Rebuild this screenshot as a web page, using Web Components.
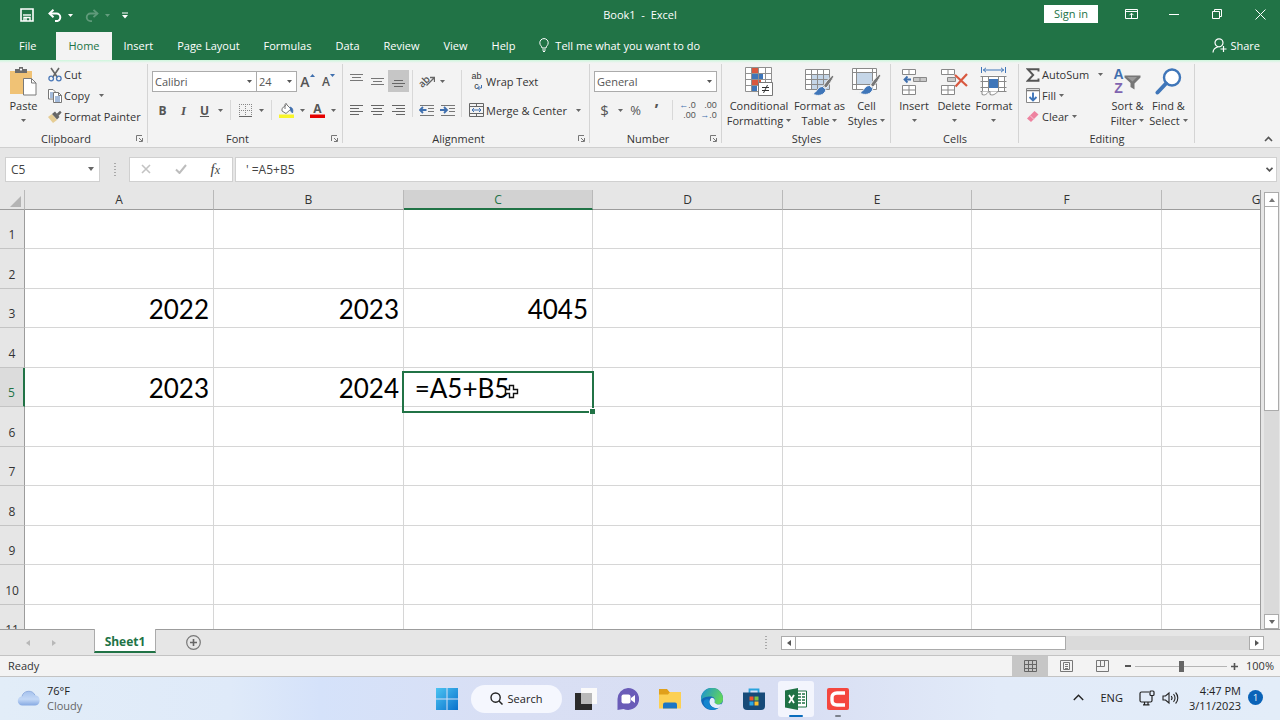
<!DOCTYPE html>
<html lang="en">
<head>
<meta charset="utf-8">
<title>Book1 - Excel</title>
<style>
  body {
    margin: 0;
    font: 11px/15px "Open Sans", "Noto Sans", sans-serif;
    color: #333;
  }
</style>
</head>
<body>
<excel-app></excel-app>

<script>
// every icon is [width, height, markup]
const ICONS = {
  save: [14, 14, '<path d="M1 1h12v12H1z" fill="none" stroke="#fff" stroke-width="1.6"/><path d="M3 7h8" stroke="#fff" stroke-width="1.4"/><path d="M4 13V9.500h6V13M6 10v3" fill="none" stroke="#fff" stroke-width="1.4"/>'],
  undo: [14, 13, '<path d="M1.500 4.500h7a3.800 3.800 0 0 1 0 7.600H7" fill="none" stroke="#fff" stroke-width="2"/><path d="M5.500 .8L1.500 4.500l4 3.700" fill="none" stroke="#fff" stroke-width="2"/>'],
  redo: [14, 13, '<g opacity=".28"><path d="M12.500 4.500h-7a3.800 3.800 0 0 0 0 7.600H7" fill="none" stroke="#fff" stroke-width="1.800"/><path d="M8.500 .8l4 3.700-4 3.700" fill="none" stroke="#fff" stroke-width="1.800"/></g>'],
  qat: [6, 7, '<path d="M0 1h6" stroke="#fff"/><path d="M0 3h6L3 6.500z" fill="#fff"/>'],
  down: [5, 3, '<path d="M0 0h5L2.500 3z" fill="currentColor"/>'],
  display: [13, 10, '<path d="M.5.5h12v9H.5z" fill="none" stroke="#fff"/><path d="M1 2.500h11M6.500 9V4.500M4.500 6.200l2-2 2 2" fill="none" stroke="#fff"/>'],
  minimize: [10, 1, '<path d="M0 .5h10" stroke="#fff"/>'],
  restore: [10, 10, '<path d="M.5 2.500h7v7h-7z M2.500 2.500v-2h7v7h-2" fill="none" stroke="#fff"/>'],
  close: [11, 11, '<path d="M.5.5l10 10M10.500.5l-10 10" stroke="#fff"/>'],
  bulb: [10, 14, '<path d="M3 10C3 8 .8 7.500 .8 4.800a4.200 4.200 0 0 1 8.400 0C9.200 7.500 7 8 7 10zM3.200 12h3.600M4 13.500h2" fill="none" stroke="#fff"/>'],
  share: [15, 15, '<circle cx="7" cy="4.800" r="4" fill="none" stroke="#fff" stroke-width="1.200"/><path d="M1 14.500c.3-3.500 2.500-5 4.800-5.500M8.500 11h6M11.500 8v6" fill="none" stroke="#fff" stroke-width="1.200"/>'],
  paste: [28, 29, '<path d="M1 4h22v23H1z" fill="#f0c275"/><path d="M6 6V2h4V0h4v2h4v4z" fill="#6b6b6b"/><circle cx="12" cy="2.600" r="1.100" fill="#fff"/><path d="M14.500 11.500h8l4.500 4.500v12H14.500z" fill="#fff" stroke="#7a7a7a"/><path d="M22.500 11.500V16H27" fill="none" stroke="#7a7a7a"/>'],
  cut: [14, 15, '<path d="M3 1l6.500 9.500M11 1L4.500 10.500" stroke="#666" stroke-width="1.600"/><circle cx="3.200" cy="11.500" r="2.300" fill="none" stroke="#4a78b8" stroke-width="1.300"/><circle cx="10.800" cy="11.500" r="2.300" fill="none" stroke="#4a78b8" stroke-width="1.300"/>'],
  copy: [14, 14, '<path d="M.5.5H5l2.500 2.500v7H.5z" fill="#fff" stroke="#777"/><path d="M2 4h3M2 6h3M2 8h3" stroke="#4a78b8"/><path d="M5.500 3.500h5l3 3v7h-8z" fill="#fff" stroke="#777"/><path d="M10.500 3.500v3h3" fill="none" stroke="#777"/><path d="M7 8h5M7 10h5M7 12h5" stroke="#4a78b8"/>'],
  painter: [14, 13, '<path d="M0 7l4-3 5 6-4 3z" fill="#e6cd94"/><path d="M4 4l3-2.500L11.500 7 9 9.500z" fill="#666"/><path d="M8.500 4L12 .8l1.600 1.600L10.500 6z" fill="#666"/>'],
  launcher: [7, 7, '<path d="M.5 6V.5H6M3 3l3 3M6.500 3v3.500H3" fill="none" stroke="#777"/>'],
  grow: [5, 3, '<path d="M0 3L2.500 0 5 3z" fill="#3f6fae"/>'],
  shrink: [5, 3, '<path d="M0 0h5L2.500 3z" fill="#3f6fae"/>'],
  borders: [13, 13, '<path d="M.5 0v12M6.500 0v12M12.500 0v12M0 .5h13M0 6.500h13" stroke="#888" stroke-dasharray="1 1"/><path d="M0 12.500h13" stroke="#666"/>'],
  bucket: [15, 15, '<path d="M3 5.500L7.500 1.500 12 6l-5 4.500L3 8z" fill="#fff" stroke="#777"/><path d="M6 6V1.500C6 .3 8 .3 8 1.500" fill="none" stroke="#777"/><path d="M11 4c2.500.5 3.500 3 2.500 6-1-1.200-2-1.500-2-3.500z" fill="#3f6fae" stroke="#3f6fae" stroke-width=".8"/><path d="M0 11.500h15V15H0z" fill="#f8f52a"/>'],
  fontcolor: [15, 15, '<path d="M0 11.500h15V15H0z" fill="#e60000"/>'],
  vtop: [13, 15, '<path d="M0 .5h13M2 3.500h9M0 6.500h13" stroke="#777"/>'],
  vmid: [13, 15, '<path d="M0 4.500h13M2 7.500h9M0 10.500h13" stroke="#777"/>'],
  vbot: [13, 15, '<path d="M2 6.500h9M0 9.500h13M2 12.500h9" stroke="#666"/>'],
  left: [13, 11, '<path d="M0 .5h13M0 3.500h9M0 6.500h13M0 9.500h9" stroke="#666"/>'],
  center: [13, 11, '<path d="M0 .5h13M2 3.500h9M0 6.500h13M2 9.500h9" stroke="#666"/>'],
  right: [13, 11, '<path d="M0 .5h13M4 3.500h9M0 6.500h13M4 9.500h9" stroke="#666"/>'],
  outdent: [16, 13, '<path d="M1 1.500h14M9 4.500h6M9 7.500h6M1 11.500h14" stroke="#777"/><path d="M7.500 6H2M4 3L1 6l3 3" fill="none" stroke="#3f6fae" stroke-width="1.800"/>'],
  indent: [16, 13, '<path d="M1 1.500h14M9 4.500h6M9 7.500h6M1 11.500h14" stroke="#777"/><path d="M0 6h6M4 3l3 3-3 3" fill="none" stroke="#3f6fae" stroke-width="1.800"/>'],
  turn: [9, 10, '<path d="M.5 9.500L8 2M4 1.500h4.500V6" fill="none" stroke="#666" stroke-width="1.300"/>'],
  wrapturn: [5, 5, '<path d="M4.500 0v3H1M2.500 1L.5 3l2 2" fill="none" stroke="#3f6fae"/>'],
  merge: [15, 14, '<path d="M.5.5h14v13H.5zM.5 3.500h14M.5 10.500h14M7.500 0v3.500M7.500 10.500V14" fill="none" stroke="#666"/><path d="M3 7h9M5 5L3 7l2 2M10 5l2 2-2 2" fill="none" stroke="#3f6fae"/>'],
  condfmt: [28, 29, '<path d="M1 1h26v23H1z" fill="#fff"/><path d="M7 1h7v5H7z" fill="#d8583f"/><path d="M7 7h11v5H7z" fill="#3f76b9"/><path d="M7 13h9v5H7z" fill="#d8583f"/><path d="M7 19h5v5H7z" fill="#3f76b9"/><path d="M.5.5h26v24H.5zM.5 6.500h26M.5 12.500h26M.5 18.500h26M6.500.5v24M13.500.5v24M20.500.5v24" fill="none" stroke="#909090"/><path d="M13.500 15.500h14v13h-14z" fill="#fff" stroke="#777"/><path d="M17 20.500h7M17 23.500h7M22.500 18l-4 8" stroke="#333" fill="none"/>'],
  fmttable: [29, 28, '<path d="M.5 1.500h24v20H.5z" fill="#fff"/><path d="M7 7h17v14H7z" fill="#c5d6e8"/><path d="M.5 1.500h24v20H.5zM.5 6.500h24M.5 11.500h24M.5 16.500h24M6.500 1.500v20M12.500 1.500v20M18.500 1.500v20" fill="none" stroke="#8a8a8a"/><path d="M27.500 7.500C25 9 20 15 18.500 18l2.500 2.200C24 17 27.500 11.500 28.800 8.500z" fill="#777" stroke="#f3f3f3"/><path d="M17.500 18.500c-5 0-5 5.500-10 7.500 5 2.500 12 2 13.500-4.500z" fill="#3f76b9" stroke="#f3f3f3"/>'],
  cellstyles: [29, 28, '<path d="M.5.5h24v21H.5z" fill="#fff"/><path d="M5 5h15v11H5z" fill="#c5d6e8"/><path d="M.5.5h24v21H.5zM.5 4.500h24M.5 16.500h24M4.500.5v21M20.500.5v21" fill="none" stroke="#8a8a8a"/><path d="M27.500 6.500C25 8 20 14 18.500 17l2.500 2.200C24 16 27.500 10.500 28.800 7.500z" fill="#777" stroke="#f3f3f3"/><path d="M17.500 17.500c-5 0-5 5.500-10 7.500 5 2.500 12 2 13.500-4.500z" fill="#3f76b9" stroke="#f3f3f3"/>'],
  insert: [26, 28, '<path d="M1.500 1.500h13v5h-13zM8 1.500v5M1.500 17.500h13v9h-13zM1.500 22h13M8 17.500v9" fill="#fff" stroke="#888"/><path d="M12.500 9.500h13v4h-13zM19 9.500v4" fill="#c8c8c8" stroke="#888"/><path d="M10 11.500H4M6.500 8.500l-3 3 3 3" fill="none" stroke="#3f6fae" stroke-width="1.800"/>'],
  delete: [28, 28, '<path d="M1.500 1.500h13v5h-13zM8 1.500v5M1.500 17.500h13v9h-13zM1.500 22h13M8 17.500v9" fill="#fff" stroke="#888"/><path d="M7.500 9.500h8v4h-8z" fill="#c8c8c8" stroke="#888"/><path d="M15 7l12 11M27 6L15.500 18.500" stroke="#d8583f" stroke-width="2.200"/>'],
  format: [27, 29, '<path d="M1.500 0v6M25.500 0v6M3 3h21M6 .8L3.500 3 6 5.200M21 .8L23.500 3 21 5.200" fill="none" stroke="#3f76b9"/><path d="M2 8.500h23.500v16H2z" fill="#fff"/><path d="M.5 9.500h26M.5 14.500h26M.5 20.500h26M.5 24.500h26M2.500 9v16M8.500 9v16M18.500 9v16M24.500 9v16" stroke="#888"/><path d="M9 12h9v9H9z" fill="#3f76b9"/><path d="M2 24.500v3c4 1.500 5-1.500 7-3M10 24.500v3c4 1.500 6-1.500 8-3" fill="#fff" stroke="#888"/>'],
  sigma: [14, 14, '<path d="M12.500 3.500V1.200H1.800L7.200 7l-5.400 5.800h10.700V10.500" fill="none" stroke="#555" stroke-width="1.900"/>'],
  fill: [14, 15, '<path d="M.5.5h13v14H.5z" fill="#fff" stroke="#888"/><path d="M.5 2.500h13" stroke="#777" stroke-width="1.500"/><path d="M7 4.500v8M3.500 9L7 12.500 10.500 9" fill="none" stroke="#3f76b9" stroke-width="1.900"/>'],
  clear: [13, 13, '<path d="M1 8.500L8.500 1l4 3.500L5 12z" fill="#ee83a0"/><path d="M4 5.500L8 9.500" stroke="#f8cad7"/>'],
  sort: [28, 27, '<path d="M11.500 7.500h16v2l-6 6V21.500l-4-2.500v-4l-6-5.500z" fill="#777"/><path d="M14 9h10l-4.500 4.500z" fill="#9a9a9a"/>'],
  find: [27, 27, '<circle cx="17" cy="9.500" r="8" fill="#fff" stroke="#3f76b9" stroke-width="2.400"/><path d="M11 15.500L2.500 24.500" stroke="#3f76b9" stroke-width="4" stroke-linecap="round"/>'],
  collapse: [9, 6, '<path d="M1 5l3.500-3.500L8 5" fill="none" stroke="#555" stroke-width="1.600"/>'],
  cancel: [10, 10, '<path d="M1 1l8 8M9 1L1 9" stroke="#c3c3c3" stroke-width="1.600"/>'],
  enter: [12, 10, '<path d="M1 5.500l3.500 3.500L11 1" fill="none" stroke="#bdbdbd" stroke-width="2"/>'],
  expand: [7, 5, '<path d="M.5 .8l3 3 3-3" fill="none" stroke="#555" stroke-width="1.800"/>'],
  dots: [2, 13, '<path d="M1 0v13" stroke="#a9a9a9" stroke-width="2" stroke-dasharray="1 2"/>'],
  corner: [11, 11, '<path d="M11 0v11H0z" fill="#b4b4b4"/>'],
  cross: [15, 15, '<path d="M5.500 1.500h4v4h4v4h-4v4h-4v-4h-4v-4h4z" fill="#fff" stroke="#111" stroke-width="1.400"/>'],
  up: [6, 4, '<path d="M0 4L3 0l3 4z" fill="#777"/>'],
  dn: [6, 4, '<path d="M0 0h6L3 4z" fill="#666"/>'],
  lt: [4, 6, '<path d="M4 0v6L0 3z" fill="currentColor"/>'],
  rt: [4, 6, '<path d="M0 0v6l4-3z" fill="currentColor"/>'],
  add: [15, 15, '<circle cx="7.500" cy="7.500" r="6.800" fill="none" stroke="#777" stroke-width="1.200"/><path d="M7.500 4v7M4 7.500h7" stroke="#666" stroke-width="1.600"/>'],
  vnormal: [13, 12, '<path d="M.5.5h12v11H.5zM.5 4.500h12M.5 8.500h12M4.500.5v11M8.500.5v11" fill="none" stroke="#666"/>'],
  vlayout: [13, 12, '<path d="M.5.5h12v11H.5zM3.500 2.500h6v7h-6zM5 4.500h3M5 6.500h3M5 8.500h3" fill="none" stroke="#777"/>'],
  vbreak: [13, 12, '<path d="M.5.5h12v11H.5zM4.500.5v6M8.500.5v6M.5 6.500h8" fill="none" stroke="#777"/>'],
  minus: [6, 2, '<path d="M0 1h6" stroke="#555" stroke-width="2"/>'],
  plus: [7, 7, '<path d="M0 3.500h7M3.500 0v7" stroke="#555" stroke-width="1.600"/>'],
  cloud: [24, 18, '<defs><linearGradient id="c" x2="0" y2="1"><stop stop-color="#a7c3ee"/><stop offset=".55" stop-color="#c3d8f6"/><stop offset="1" stop-color="#86a9e2"/></linearGradient></defs><path d="M5.500 16.500a4.600 4.600 0 0 1-.3-9.200A7 7 0 0 1 18 6.200a5.200 5.200 0 0 1 .3 10.300z" fill="url(#c)"/><path d="M5 7.300A7 7 0 0 1 18 6.200" fill="none" stroke="#7f9fd8" stroke-width=".8"/>'],
  start: [22, 22, '<defs><linearGradient id="s" x2="1" y2="1"><stop stop-color="#4cc4f2"/><stop offset="1" stop-color="#0a71cc"/></linearGradient></defs><path d="M0 0h10.500v10.500H0zM11.500 0H22v10.500H11.500zM0 11.500h10.500V22H0zM11.500 11.500H22V22H11.500z" fill="url(#s)"/>'],
  search: [13, 13, '<circle cx="5.600" cy="5.600" r="4.600" fill="none" stroke="#222" stroke-width="1.400"/><path d="M9 9l3.500 3.500" stroke="#222" stroke-width="1.500"/>'],
  taskview: [22, 22, '<path d="M6 0h16v16H6z" fill="#fafafa"/><path d="M0 5h17v17H0z" fill="#2b2b2b"/><path d="M6 5h11v11H6z" fill="#b9b9b9"/>'],
  chat: [22, 22, '<path d="M11 0a11 11 0 1 1-4.500 21L.5 22V11A11 11 0 0 1 11 0z" fill="#6a5cb8"/><rect x="4.500" y="6.500" width="9" height="9" rx="2" fill="#fff"/><path d="M14 10l4-3v8l-4-3z" fill="#fff"/>'],
  folder: [24, 21, '<path d="M1 1h8l2.500 3H22v5H1z" fill="#e0a01b"/><path d="M1 6.500h9L12 4h11v16.500H1z" fill="#fcd053"/><path d="M5 20.500v-4a2 2 0 0 1 2-2h10a2 2 0 0 1 2 2v4z" fill="#1b76c4"/>'],
  edge: [22, 22, '<defs><linearGradient id="e" y2=".4"><stop stop-color="#1a8fd6"/><stop offset="1" stop-color="#5fd45f"/></linearGradient></defs><circle cx="11" cy="11" r="11" fill="#1268b8"/><path d="M0 10.500A11 11 0 0 1 22 11c0 4-3 5.500-5.500 5.500-3 0-3.500-1-3-2 1-1.500.8-6-4-6C5 8.500 1 9.500 0 13z" fill="url(#e)"/><path d="M13.500 14.500c1 2 5 3 7.700 1A11 11 0 0 1 17.500 20C12 21 8 17 8.500 13c.3-2 1.500-3 2.500-3.300 3 .3 3.200 3.300 2.500 4.800z" fill="#e3edfb"/><path d="M8.500 12C6.500 16 11 21.500 17.500 20 12 24 3 21 2.500 14.500 3 11.500 6 10.500 8.500 12z" fill="#1585cf"/>'],
  store: [22, 22, '<path d="M6.500 5V1.500h9V5" fill="none" stroke="#2aa3dd" stroke-width="1.800"/><path d="M0 4.500h22V18a4 4 0 0 1-4 4H4a4 4 0 0 1-4-4z" fill="#174a78"/><path d="M6.500 8.500h4v4h-4z" fill="#f0562c"/><path d="M11.500 8.500h4v4h-4z" fill="#7fc241"/><path d="M6.500 13.500h4v4h-4z" fill="#2ba7e4"/><path d="M11.500 13.500h4v4h-4z" fill="#fbc02d"/>'],
  excel: [22, 22, '<path d="M11 3h10.500v16H11z" fill="#fff" stroke="#1f7245"/><path d="M13 6h3M17 6h3M13 9h3M17 9h3M13 12h3M17 12h3M13 15h3M17 15h3" stroke="#1f7245" stroke-width="1.600"/><path d="M0 2.500L13 0v22L0 19.500z" fill="#1f7245"/><path d="M4 7l5 8M9 7l-5 8" stroke="#fff" stroke-width="1.800"/>'],
  camtasia: [22, 22, '<rect width="22" height="22" rx="2" fill="#f4473f"/><path d="M18 5H10C6.500 5 5 6.500 5 9.500v3C5 15.500 6.500 17 10 17h8" fill="none" stroke="#fff" stroke-width="3.400"/>'],
  chevron: [11, 7, '<path d="M.8 6l4.700-4.700L10.200 6" fill="none" stroke="#222" stroke-width="1.400"/>'],
  network: [16, 16, '<path d="M10 2H2.500A1.500 1.500 0 0 0 1 3.500v7A1.500 1.500 0 0 0 2.500 12h9a1.500 1.500 0 0 0 1.500-1.500V8M4 14.800h6.500M5.500 12v2.500M9 12v2.500M13 8V5.500" fill="none" stroke="#222" stroke-width="1.200"/><rect x="11" y="1" width="4" height="4.500" rx="1" fill="none" stroke="#222" stroke-width="1.200"/>'],
  volume: [17, 14, '<path d="M1 5h2.500L7 2v10L3.500 9H1z" fill="none" stroke="#222" stroke-width="1.100"/><path d="M9.200 5a3 3 0 0 1 0 4M11.500 3.200a5.500 5.500 0 0 1 0 7.600M13.600 1.500a8 8 0 0 1 0 11" fill="none" stroke="#222" stroke-width="1.100"/>']
}

const icon = name => {
  const [w, h, body] = ICONS[name]
  return `<svg width="${w}" height="${h}" viewBox="0 0 ${w} ${h}" aria-hidden="true">${body}</svg>`
}

class BaseElement extends HTMLElement {
  constructor() {
    super()
    this.attachShadow({mode: 'open'})
    this.template = document.createElement('template')
  }

  connectedCallback() {
    this.template.innerHTML = `
      <style>
        * {
          box-sizing: border-box;
        }
        button, input, select {
          font: inherit;
          color: inherit;
          margin: 0;
          padding: 0;
          border: 0;
          border-radius: 0;
          background: none;
          white-space: nowrap;
        }
        svg {
          display: block;
          flex: none;
        }
      </style>
      ${this.render()}
    `
    this.shadowRoot.appendChild(this.template.content.cloneNode(true))
  }
}

class ExcelApp extends BaseElement {
  render() {
    return `
      <style>
        :host {
          display: flex;
          flex-direction: column;
          height: 100vh;
          overflow: hidden;
          background: #e6e6e6;
        }
      </style>
      <title-bar></title-bar>
      <ribbon-tabs></ribbon-tabs>
      <excel-ribbon></excel-ribbon>
      <formula-bar></formula-bar>
      <sheet-grid></sheet-grid>
      <sheet-bar></sheet-bar>
      <status-bar></status-bar>
      <task-bar></task-bar>
    `
  }
}

class TitleBar extends BaseElement {
  render() {
    return `
      <style>
        :host {
          display: grid;
          grid-template-columns: 1fr auto 1fr;
          align-items: center;
          flex: none;
          height: 32px;
          padding-bottom: 4px;
          box-sizing: border-box;
          background: #217346;
          color: #fff;
        }
        div {
          display: flex;
          align-items: center;
        }
        .quick {
          padding: 2px 0 0 20px;
        }
        .quick button + button {
          margin-left: 6px;
        }
        .quick .tool {
          margin-left: 12px;
        }
        .quick .tool:nth-child(2) {
          margin-left: 14px;
        }
        .faded {
          opacity: .3;
        }
        .title {
          white-space: pre;
        }
        .window {
          justify-content: flex-end;
          gap: 23px;
          padding-right: 10px;
        }
        .window button {
          display: flex;
          justify-content: center;
          width: 20px;
        }
        .window .sign {
          width: 54px;
          height: 18px;
          line-height: 18px;
          background: #fff;
          color: #217346;
        }
      </style>
      <div class="quick">
        <button aria-label="Save">${icon('save')}</button>
        <button class="tool" aria-label="Undo">${icon('undo')}</button>
        <button aria-label="Undo list">${icon('down')}</button>
        <button class="tool" aria-label="Redo">${icon('redo')}</button>
        <button class="faded" aria-label="Redo list">${icon('down')}</button>
        <button class="tool" aria-label="Customize toolbar">${icon('qat')}</button>
      </div>
      <span class="title">Book1  -  Excel</span>
      <div class="window">
        <button class="sign">Sign in</button>
        <button aria-label="Ribbon display options">${icon('display')}</button>
        <button aria-label="Minimize">${icon('minimize')}</button>
        <button aria-label="Restore">${icon('restore')}</button>
        <button aria-label="Close">${icon('close')}</button>
      </div>
    `
  }
}

class RibbonTabs extends BaseElement {
  render() {
    const tabs = ['Insert', 'Page Layout', 'Formulas', 'Data', 'Review', 'View', 'Help']
    return `
      <style>
        :host {
          display: flex;
          flex: none;
          height: 28px;
          background: #217346;
          color: #fff;
        }
        button {
          display: flex;
          align-items: center;
          gap: 6px;
          padding: 0 12px 2px;
        }
        .file {
          padding: 0 20px 2px 19px;
        }
        .active {
          background: #f3f3f3;
          color: #217346;
        }
        .share {
          margin-left: auto;
          padding: 0 20px 2px;
          gap: 3px;
        }
      </style>
      <button class="file">File</button>
      <button class="active">Home</button>
      ${tabs.map(tab => `<button>${tab}</button>`).join('')}
      <button>${icon('bulb')}Tell me what you want to do</button>
      <button class="share">${icon('share')}Share</button>
    `
  }
}

// group of ribbon tools with its caption below
class RibbonGroup extends BaseElement {
  render() {
    return `
      <style>
        :host {
          display: flex;
          flex-direction: column;
          flex: none;
          box-sizing: border-box;
          padding: 3px 0 1px;
          position: relative;
        }
        :host::after {
          content: "";
          position: absolute;
          right: 0;
          top: 4px;
          bottom: 4px;
          width: 1px;
          background: #d4d4d4;
        }
        .tools {
          display: flex;
          flex: 1;
        }
        footer {
          display: flex;
          align-items: center;
          height: 16px;
          text-align: center;
        }
        .label {
          flex: 1;
        }
        footer button {
          flex: 0 0 16px;
          padding-left: 4px;
        }
      </style>
      <div class="tools"><slot></slot></div>
      <footer>
        <span class="label">${this.getAttribute('label')}</span>
        ${this.hasAttribute('launcher') ? `<button aria-label="${this.getAttribute('label')} settings">${icon('launcher')}</button>` : ''}
      </footer>
    `
  }
}

// tall button: picture, first line, second line with the drop-down arrow
class BigButton extends BaseElement {
  render() {
    return `
      <style>
        :host {
          display: flex;
          justify-content: center;
          min-width: 0;
          padding-top: 4px;
        }
        button {
          display: flex;
          flex: none;
          flex-direction: column;
          align-items: center;
        }
        .picture {
          display: flex;
          position: relative;
          align-items: center;
          height: 29px;
          margin-bottom: 2px;
        }
        .second {
          display: flex;
          align-items: center;
          gap: 3px;
          height: 15px;
        }
        .second svg {
          color: #666;
        }
        .letters {
          position: absolute;
          left: 0;
          top: 0;
          font: 14px/14px "Liberation Sans", sans-serif;
          font-weight: 700;
          color: #3f6fae;
        }
        .letters i {
          display: block;
          font-style: normal;
          color: #8064b0;
        }
      </style>
      <button>
        <span class="picture">
          ${icon(this.getAttribute('icon'))}
          ${this.hasAttribute('letters') ? '<span class="letters">A<i>Z</i></span>' : ''}
        </span>
        <span><slot></slot></span>
        <span class="second">${this.getAttribute('second') || ''}${icon('down')}</span>
      </button>
    `
  }
}

// one-line button: icon, text and an optional arrow
class LineButton extends BaseElement {
  render() {
    return `
      <style>
        :host {
          display: block;
        }
        button {
          display: flex;
          align-items: center;
          height: var(--line, 22px);
          gap: 2px;
        }
        .icon {
          display: flex;
          justify-content: center;
          width: 15px;
        }
        .arrow {
          color: #666;
          margin-left: var(--arrow-gap, 1px);
        }
      </style>
      <button>
        <span class="icon"><slot name="icon">${this.hasAttribute('icon') ? icon(this.getAttribute('icon')) : ''}</slot></span>
        <slot></slot>
        ${this.hasAttribute('arrow') ? `<span class="arrow">${icon('down')}</span>` : ''}
      </button>
    `
  }
}

// square tool, holds an icon or a slotted glyph
class ToolButton extends BaseElement {
  render() {
    return `
      <style>
        :host {
          display: flex;
          flex: none;
          height: 22px;
          color: #555;
        }
        button {
          display: flex;
          align-items: center;
          justify-content: center;
          width: 21px;
        }
        .arrow {
          width: 10px;
          color: #666;
        }
        :host([active]) button {
          background: #c6c6c6;
        }
      </style>
      <button aria-label="${this.getAttribute('label')}">
        ${this.hasAttribute('icon') ? icon(this.getAttribute('icon')) : ''}<slot></slot>
      </button>
      ${this.hasAttribute('arrow') ? `<button class="arrow" aria-label="${this.getAttribute('label')} options">${icon('down')}</button>` : ''}
    `
  }
}

class DropDown extends BaseElement {
  render() {
    return `
      <style>
        :host {
          display: block;
          position: relative;
          height: 21px;
          color: #555;
        }
        select {
          appearance: none;
          width: 100%;
          height: 100%;
          padding: 0 2px;
          border: 1px solid #ababab;
          background: #fff;
        }
        svg {
          position: absolute;
          right: 5px;
          top: 9px;
          pointer-events: none;
        }
      </style>
      <select aria-label="${this.getAttribute('label')}">
        <option>${this.getAttribute('value')}</option>
      </select>
      ${icon('down')}
    `
  }
}

class ExcelRibbon extends BaseElement {
  render() {
    return `
      <style>
        :host {
          display: flex;
          flex: none;
          height: 88px;
          box-sizing: border-box;
          border-bottom: 1px solid #cfcfcf;
          background: linear-gradient(#cdf6dc, #f3f3f3 3px);
        }
        .rows {
          display: flex;
          flex-direction: column;
          gap: 7px;
          padding-top: 7px;
        }
        .row {
          display: flex;
          align-items: center;
          height: 22px;
        }
        .lines {
          --line: 21px;
          display: flex;
          flex-direction: column;
          padding-top: 1px;
        }
        .sep {
          width: 1px;
          height: 20px;
          margin: 0 4px 0 5px;
          background: #d8d8d8;
        }
        .bar {
          width: 1px;
          margin: 7px 3px 13px;
          background: #d8d8d8;
        }
        .clipboard { width: 148px; }
        .font { width: 195px; }
        .font .rows, .number .rows { padding-left: 4px; }
        .align { width: 247px; }
        .number { width: 132px; }
        .styles { width: 169px; }
        .cells { width: 128px; }
        .editing { width: 176px; }
        .clipboard big-button { flex: 0 0 47px; }
        .align .rows:first-child { padding-left: 3px; }
        .align .rows line-button { margin-left: 4px; }
        .styles big-button { flex: 0 0 47px; }
        .styles big-button:first-child { flex-basis: 74px; }
        .cells big-button { flex: 0 0 40px; }
        .cells big-button:first-child { margin-left: 3px; }
        .editing .lines { flex: 0 0 88px; padding-left: 6px; }
        .editing big-button { flex: 0 0 41px; }
        .name { width: 105px; }
        .size { width: 41px; margin-left: -1px; }
        .format { width: 123px; }
        .wide { --arrow-gap: 7px; }
        .glyph {
          font: bold 12px/15px "Open Sans", sans-serif;
        }
        .italic {
          font: italic bold 13px/15px "Liberation Serif", serif;
        }
        .under {
          text-decoration: underline;
        }
        .sized {
          display: flex;
          font: 600 14px/15px "Open Sans", sans-serif;
        }
        .small {
          font-size: 12px;
        }
        .over {
          position: relative;
          width: 15px;
          height: 15px;
          font: bold 12px/11px "Open Sans", sans-serif;
          text-align: center;
        }
        .over svg {
          position: absolute;
          inset: 0;
        }
        .turned {
          display: flex;
          align-items: center;
          font-size: 10px;
        }
        .turned b {
          font-weight: 600;
          transform: rotate(-45deg);
        }
        .turned svg {
          margin-left: -4px;
        }
        .abc {
          position: relative;
          font: 9px/10px "Liberation Sans", sans-serif;
          width: 11px;
        }
        .abc svg {
          position: absolute;
          right: 0;
          bottom: 1px;
        }
        .money {
          font-size: 15px;
        }
        .percent {
          font-size: 13px;
        }
        .comma {
          font: bold 16px/16px "Open Sans", sans-serif;
        }
        .decimal {
          font: 9px/10px "Liberation Sans", sans-serif;
          text-align: right;
        }
        .decimal i {
          font-style: normal;
          color: #3f6fae;
        }
        .collapse {
          margin: auto 7px 5px auto;
        }
      </style>
      <ribbon-group class="clipboard" label="Clipboard" launcher>
        <big-button icon="paste">Paste</big-button>
        <div class="lines">
          <line-button icon="cut">Cut</line-button>
          <line-button class="wide" icon="copy" arrow>Copy</line-button>
          <line-button icon="painter">Format Painter</line-button>
        </div>
      </ribbon-group>
      <ribbon-group class="font" label="Font" launcher>
        <div class="rows">
          <div class="row">
            <drop-down class="name" label="Font" value="Calibri"></drop-down>
            <drop-down class="size" label="Font size" value="24"></drop-down>
            <tool-button label="Increase font size"><span class="sized">A${icon('grow')}</span></tool-button>
            <tool-button label="Decrease font size"><span class="sized small">A${icon('shrink')}</span></tool-button>
          </div>
          <div class="row">
            <tool-button label="Bold"><span class="glyph">B</span></tool-button>
            <tool-button label="Italic"><span class="italic">I</span></tool-button>
            <tool-button label="Underline" arrow><span class="glyph under">U</span></tool-button>
            <span class="sep"></span>
            <tool-button label="Borders" icon="borders" arrow></tool-button>
            <span class="sep"></span>
            <tool-button label="Fill color" icon="bucket" arrow></tool-button>
            <tool-button label="Font color" arrow><span class="over">${icon('fontcolor')}A</span></tool-button>
          </div>
        </div>
      </ribbon-group>
      <ribbon-group class="align" label="Alignment" launcher>
        <div class="rows">
          <div class="row">
            <tool-button label="Top align" icon="vtop"></tool-button>
            <tool-button label="Middle align" icon="vmid"></tool-button>
            <tool-button label="Bottom align" icon="vbot" active></tool-button>
          </div>
          <div class="row">
            <tool-button label="Align left" icon="left"></tool-button>
            <tool-button label="Center" icon="center"></tool-button>
            <tool-button label="Align right" icon="right"></tool-button>
          </div>
        </div>
        <span class="bar"></span>
        <div class="rows">
          <div class="row">
            <tool-button label="Orientation" arrow><span class="turned"><b>ab</b>${icon('turn')}</span></tool-button>
          </div>
          <div class="row">
            <tool-button label="Decrease indent" icon="outdent"></tool-button>
            <tool-button label="Increase indent" icon="indent"></tool-button>
          </div>
        </div>
        <span class="bar"></span>
        <div class="rows">
          <div class="row">
            <line-button><span class="abc" slot="icon">ab<br>c ${icon('wrapturn')}</span>Wrap Text</line-button>
          </div>
          <div class="row">
            <line-button class="wide" icon="merge" arrow>Merge &amp; Center</line-button>
          </div>
        </div>
      </ribbon-group>
      <ribbon-group class="number" label="Number" launcher>
        <div class="rows">
          <div class="row">
            <drop-down class="format" label="Number format" value="General"></drop-down>
          </div>
          <div class="row">
            <tool-button label="Currency" arrow><span class="money">$</span></tool-button>
            <tool-button label="Percent"><span class="percent">%</span></tool-button>
            <tool-button label="Comma style"><span class="comma">’</span></tool-button>
            <span class="sep"></span>
            <tool-button label="Increase decimal"><span class="decimal"><i>←</i>.0<br>.00</span></tool-button>
            <tool-button label="Decrease decimal"><span class="decimal">.00<br><i>→</i>.0</span></tool-button>
          </div>
        </div>
      </ribbon-group>
      <ribbon-group class="styles" label="Styles">
        <big-button icon="condfmt" second="Formatting">Conditional</big-button>
        <big-button icon="fmttable" second="Table">Format as</big-button>
        <big-button icon="cellstyles" second="Styles">Cell</big-button>
      </ribbon-group>
      <ribbon-group class="cells" label="Cells">
        <big-button icon="insert">Insert</big-button>
        <big-button icon="delete">Delete</big-button>
        <big-button icon="format">Format</big-button>
      </ribbon-group>
      <ribbon-group class="editing" label="Editing">
        <div class="lines">
          <line-button class="wide" icon="sigma" arrow>AutoSum</line-button>
          <line-button icon="fill" arrow>Fill</line-button>
          <line-button icon="clear" arrow>Clear</line-button>
        </div>
        <big-button icon="sort" letters second="Filter">Sort &amp;</big-button>
        <big-button icon="find" second="Select">Find &amp;</big-button>
      </ribbon-group>
      <button class="collapse" aria-label="Collapse ribbon">${icon('collapse')}</button>
    `
  }
}

class FormulaBar extends BaseElement {
  render() {
    return `
      <style>
        :host {
          display: flex;
          align-items: center;
          flex: none;
          height: 42px;
          box-sizing: border-box;
          padding: 0 3px 0 5px;
          font-size: 12px;
          color: #444;
        }
        .box {
          display: flex;
          align-items: center;
          height: 25px;
          border: 1px solid #d0d0d0;
          background: #fff;
        }
        .name {
          width: 95px;
          padding: 0 5px;
        }
        input {
          flex: 1;
          min-width: 0;
          outline: 0;
        }
        .dots {
          margin: 0 13px 0 14px;
        }
        .actions {
          justify-content: space-between;
          width: 104px;
          padding: 0 12px 0 11px;
          margin-right: 2px;
        }
        .fx {
          font: italic 15px/16px "Liberation Serif", serif;
        }
        .fx small {
          font-size: 12px;
        }
        .formula {
          flex: 1;
          padding: 0 3px 0 10px;
        }
      </style>
      <div class="box name">
        <input aria-label="Name box" value="C5">
        <button aria-label="Names">${icon('dn')}</button>
      </div>
      <span class="dots">${icon('dots')}</span>
      <div class="box actions">
        <button aria-label="Cancel">${icon('cancel')}</button>
        <button aria-label="Enter">${icon('enter')}</button>
        <button class="fx" aria-label="Insert function">f<small>x</small></button>
      </div>
      <div class="box formula">
        <input aria-label="Formula" value="' =A5+B5">
        <button aria-label="Expand formula bar">${icon('expand')}</button>
      </div>
    `
  }
}

class SheetGrid extends BaseElement {
  constructor() {
    super()
    this.columns = ['A', 'B', 'C', 'D', 'E', 'F', 'G']
    this.values = {A3: '2022', B3: '2023', C3: '4045', A5: '2023', B5: '2024', C5: ' =A5+B5'}
    this.selected = 'C5'
  }

  renderCell(id) {
    if (id === this.selected) {
      return `<td class="text">${this.values[id]}<span class="frame"></span><span class="cursor">${icon('cross')}</span></td>`
    }
    return `<td>${this.values[id] || ''}</td>`
  }

  renderRow(row) {
    const active = this.selected.slice(1) === String(row) ? ' class="active"' : ''
    return `<tr><th${active}>${row}</th>${this.columns.map(col => this.renderCell(col + row)).join('')}</tr>`
  }

  render() {
    const rows = Array.from({length: 11}, (_, i) => i + 1)
    return `
      <style>
        :host {
          display: flex;
          flex: 1;
          min-height: 0;
          overflow: hidden;
        }
        .sheet {
          flex: 1;
          overflow: hidden;
          border-right: 1px solid #9c9c9c;
        }
        table {
          width: 1351px;
          table-layout: fixed;
          border-collapse: separate;
          border-spacing: 0;
          background: #fff;
        }
        col { width: 190px; }
        col:nth-child(even) { width: 189px; }
        col:first-child { width: 25px; }
        th {
          padding: 0;
          font-weight: 400;
          font-size: 12px;
          line-height: 18px;
          color: #333;
          background: #e6e6e6;
        }
        thead th {
          height: 20px;
          border-right: 1px solid #b9b9b9;
          border-bottom: 1px solid #9c9c9c;
        }
        thead .active {
          background: #d2d2d2;
          border-bottom: 2px solid #217346;
          color: #217346;
          line-height: 17px;
        }
        thead svg {
          margin: 3px 0 0 10px;
        }
        tbody tr { height: 39px; }
        tbody tr:nth-child(even) { height: 40px; }
        tbody th {
          vertical-align: bottom;
          padding-bottom: 4px;
          border-right: 1px solid #9c9c9c;
          border-bottom: 1px solid #c4c4c4;
        }
        tbody .active {
          background: #dcdcdc;
          border-right: 2px solid #217346;
          color: #217346;
        }
        td {
          position: relative;
          padding: 2px 4px 0;
          border-right: 1px solid #d6d6d6;
          border-bottom: 1px solid #d6d6d6;
          font: 26px/30px Lato, sans-serif;
          color: #000;
          text-align: right;
          white-space: pre;
        }
        .text {
          text-align: left;
        }
        .frame {
          position: absolute;
          left: -2px;
          right: -2px;
          top: 3px;
          height: 42px;
          z-index: 1;
          border: 2px solid #217346;
        }
        .frame::after {
          content: "";
          position: absolute;
          right: -3px;
          bottom: -3px;
          width: 5px;
          height: 5px;
          border: solid #fff;
          border-width: 1px 0 0 1px;
          background: #217346;
        }
        .cursor {
          position: absolute;
          left: 100px;
          top: 16px;
          z-index: 2;
        }
        .scroll {
          display: flex;
          flex-direction: column;
          width: 15px;
          margin: 2px 1px 0 3px;
          background: #dadada;
        }
        .scroll button, .thumb {
          display: flex;
          align-items: center;
          justify-content: center;
          height: 15px;
          border: 1px solid #ababab;
          background: #fff;
        }
        .scroll .thumb {
          height: 47%;
          margin: -1px 0 auto;
        }
      </style>
      <div class="sheet">
        <table>
          <colgroup><col>${this.columns.map(() => '<col>').join('')}</colgroup>
          <thead>
            <tr>
              <th>${icon('corner')}</th>
              ${this.columns.map(col => `<th${col === this.selected[0] ? ' class="active"' : ''}>${col}</th>`).join('')}
            </tr>
          </thead>
          <tbody>${rows.map(row => this.renderRow(row)).join('')}</tbody>
        </table>
      </div>
      <div class="scroll">
        <button aria-label="Scroll up">${icon('up')}</button>
        <div class="thumb"></div>
        <button aria-label="Scroll down">${icon('dn')}</button>
      </div>
    `
  }
}

class SheetBar extends BaseElement {
  render() {
    return `
      <style>
        :host {
          display: flex;
          align-items: center;
          flex: none;
          height: 26px;
          box-sizing: border-box;
          padding: 0 16px 0 26px;
          border-top: 1px solid #9c9c9c;
        }
        .nav {
          width: 4px;
          margin-right: 22px;
          color: #b8b8b8;
        }
        .tab {
          align-self: flex-start;
          width: 62px;
          height: 24px;
          margin: -1px 30px 0 16px;
          padding-top: 2px;
          border: 1px solid #ababab;
          border-width: 0 1px;
          border-bottom: 2px solid #217346;
          background: #fff;
          font-size: 12px;
          font-weight: 700;
          color: #217346;
        }
        .dots {
          margin-left: auto;
        }
        .scroll {
          display: flex;
          width: 39%;
          height: 14px;
          margin-left: 14px;
          background: #dadada;
          color: #555;
        }
        .scroll button, .thumb {
          display: flex;
          align-items: center;
          justify-content: center;
          flex: none;
          width: 15px;
          border: 1px solid #ababab;
          background: #fff;
        }
        .scroll .thumb {
          width: 56%;
          margin: 0 auto 0 -1px;
        }
      </style>
      <button class="nav" aria-label="Previous sheet">${icon('lt')}</button>
      <button class="nav" aria-label="Next sheet">${icon('rt')}</button>
      <button class="tab">Sheet1</button>
      <button aria-label="New sheet">${icon('add')}</button>
      <span class="dots">${icon('dots')}</span>
      <div class="scroll">
        <button aria-label="Scroll left">${icon('lt')}</button>
        <div class="thumb"></div>
        <button aria-label="Scroll right">${icon('rt')}</button>
      </div>
    `
  }
}

class StatusBar extends BaseElement {
  render() {
    return `
      <style>
        :host {
          display: flex;
          align-items: center;
          flex: none;
          height: 22px;
          box-sizing: border-box;
          padding: 0 6px 0 8px;
          border: solid #c3c3c3;
          border-width: 1px 0;
          background: #f3f3f3;
        }
        span {
          padding-bottom: 2px;
        }
        .ready {
          margin-right: auto;
        }
        .view {
          display: flex;
          align-items: center;
          justify-content: center;
          width: 36px;
          height: 100%;
        }
        .active {
          background: #c6c6c6;
        }
        .out {
          margin-left: 5px;
        }
        input {
          appearance: none;
          width: 92px;
          height: 12px;
          margin: 0 4px;
          background: linear-gradient(#b5b5b5, #b5b5b5) center / 100% 1px no-repeat;
        }
        input::-webkit-slider-thumb {
          appearance: none;
          width: 5px;
          height: 11px;
          background: #666;
        }
        .level {
          margin-left: 8px;
        }
      </style>
      <span class="ready">Ready</span>
      <button class="view active" aria-label="Normal">${icon('vnormal')}</button>
      <button class="view" aria-label="Page layout">${icon('vlayout')}</button>
      <button class="view" aria-label="Page break preview">${icon('vbreak')}</button>
      <button class="out" aria-label="Zoom out">${icon('minus')}</button>
      <input type="range" aria-label="Zoom" min="0" max="100" value="50">
      <button aria-label="Zoom in">${icon('plus')}</button>
      <span class="level">100%</span>
    `
  }
}

class TaskBar extends BaseElement {
  render() {
    const apps = [
      ['taskview', 'Task view'],
      ['chat', 'Chat'],
      ['folder', 'File Explorer'],
      ['edge', 'Edge'],
      ['store', 'Store'],
      ['excel', 'Excel', 'current'],
      ['camtasia', 'Camtasia', 'running']
    ]
    return `
      <style>
        :host {
          display: grid;
          grid-template-columns: 1fr auto 1fr;
          align-items: center;
          flex: none;
          height: 43px;
          background: linear-gradient(90deg, #e2edf8, #dfeaf9 18%, #d5e2fa 25%, #d9dff4 40%, #d8def3 62%, #e2ebf9 78%, #e3edf9);
          color: #222;
        }
        div {
          display: flex;
          align-items: center;
        }
        .weather {
          gap: 6px;
          padding: 0 0 2px 17px;
        }
        .weather small {
          display: block;
          font-size: 11px;
          color: #666;
        }
        .apps {
          gap: 6px;
          padding-left: 4px;
        }
        .app {
          display: flex;
          position: relative;
          align-items: center;
          justify-content: center;
          width: 36px;
          height: 36px;
          border-radius: 3px;
        }
        .current {
          background: #f3f5fd;
        }
        .current::after, .running::after {
          content: "";
          position: absolute;
          bottom: 0;
          width: 6px;
          height: 2px;
          border-radius: 1px;
          background: #7b818c;
        }
        .current::after {
          width: 14px;
          background: #0a6cbd;
        }
        .search {
          display: flex;
          align-items: center;
          justify-content: center;
          gap: 5px;
          width: 91px;
          height: 28px;
          border-radius: 14px;
          background: #f5f7fe;
        }
        .tray {
          justify-content: flex-end;
          padding: 0 17px 2px 0;
        }
        .chevron {
          margin-right: 16px;
        }
        .network {
          margin: 0 7px 0 16px;
        }
        .clock {
          margin: 0 7px 0 10px;
          text-align: right;
        }
        .badge {
          width: 15px;
          height: 15px;
          border-radius: 50%;
          background: #0a63b8;
          color: #fff;
          font-size: 9px;
          text-align: center;
        }
      </style>
      <div class="weather">
        ${icon('cloud')}
        <span>76°F<small>Cloudy</small></span>
      </div>
      <div class="apps">
        <button class="app" aria-label="Start">${icon('start')}</button>
        <button class="search">${icon('search')}Search</button>
        ${apps.map(([name, label, state]) => `<button class="app ${state || ''}" aria-label="${label}">${icon(name)}</button>`).join('')}
      </div>
      <div class="tray">
        <button class="chevron" aria-label="Hidden icons">${icon('chevron')}</button>
        <span>ENG</span>
        <span class="network">${icon('network')}</span>
        ${icon('volume')}
        <span class="clock">4:47 PM<br>3/11/2023</span>
        <span class="badge">1</span>
      </div>
    `
  }
}

customElements.define('big-button', BigButton)
customElements.define('line-button', LineButton)
customElements.define('tool-button', ToolButton)
customElements.define('drop-down', DropDown)
customElements.define('ribbon-group', RibbonGroup)
customElements.define('title-bar', TitleBar)
customElements.define('ribbon-tabs', RibbonTabs)
customElements.define('excel-ribbon', ExcelRibbon)
customElements.define('formula-bar', FormulaBar)
customElements.define('sheet-grid', SheetGrid)
customElements.define('sheet-bar', SheetBar)
customElements.define('status-bar', StatusBar)
customElements.define('task-bar', TaskBar)
customElements.define('excel-app', ExcelApp)
</script>
</body>
</html>
